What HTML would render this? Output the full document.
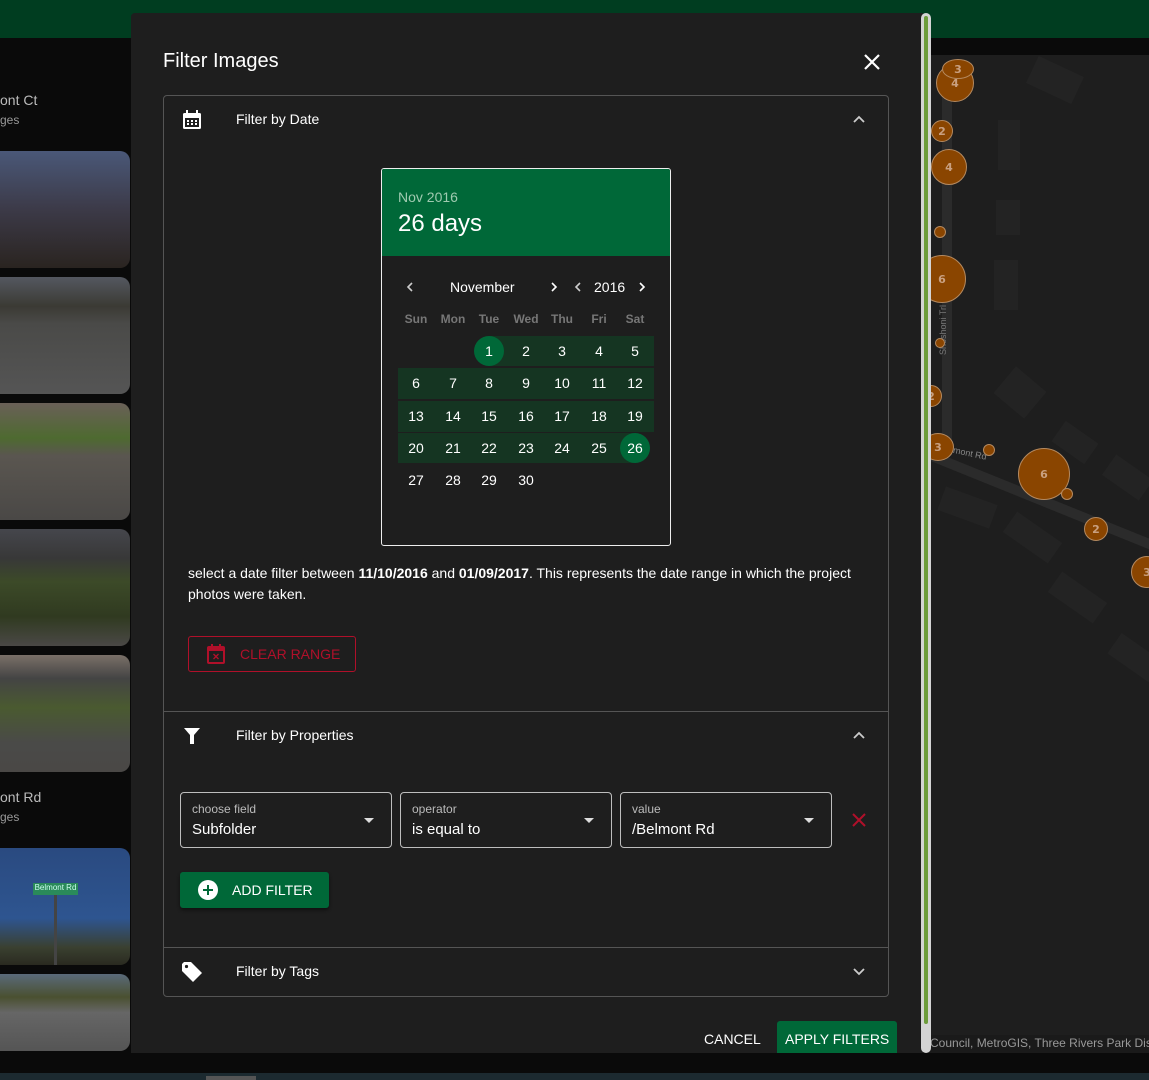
<!DOCTYPE html>
<html><head><meta charset="utf-8">
<style>
*{box-sizing:border-box;margin:0;padding:0}
body{width:1149px;height:1080px;overflow:hidden;background:#0a0a0a;font-family:"Liberation Sans",Arial,sans-serif;color:#fff;position:relative}
.abs{position:absolute}
.card{position:absolute;left:0;width:130px;border-radius:0 10px 10px 0;overflow:hidden}
.t{position:absolute;white-space:nowrap}
.day{position:absolute;width:30px;height:30px;line-height:30px;text-align:center;font-size:14px;color:#fff}
.wd{position:absolute;width:40px;text-align:center;font-size:12px;color:#777;font-weight:bold;top:312px}
.strip{position:absolute;left:398px;width:256px;height:30px;background:#153522}
.circ{position:absolute;width:30px;height:30px;border-radius:50%;background:#006838}
.mk{position:absolute;border-radius:50%;background:#8a4500;border:1px solid #b58a60;color:#c9a080;font-size:11px;font-weight:bold;display:flex;align-items:center;justify-content:center;font-family:"DejaVu Sans",sans-serif}
.sel{position:absolute;top:792px;width:212px;height:56px;border:1px solid #bdbdbd;border-radius:4px}
.sel .l{position:absolute;left:11px;top:9px;font-size:12px;color:#bbb}
.sel .v{position:absolute;left:11px;top:28px;font-size:15px;color:#fff}
.sel .a{position:absolute;right:17px;top:25px;width:0;height:0;border-left:5px solid transparent;border-right:5px solid transparent;border-top:5px solid #ddd}
</style></head><body>
<div class="abs" style="left:0;top:0;width:1149px;height:38px;background:#003d20"></div>
<div class="abs" style="left:930px;top:55px;width:219px;height:998px;background:#1e1e1e;overflow:hidden">
 <div class="abs" style="left:12px;top:40px;width:10px;height:360px;background:#2b2b2b"></div>
 <div class="abs" style="left:0;top:395px;width:260px;height:10px;background:#2b2b2b;transform:rotate(22deg);transform-origin:0 0"></div>
 <div class="abs" style="left:100px;top:10px;width:50px;height:30px;background:#232323;transform:rotate(25deg)"></div>
 <div class="abs" style="left:68px;top:65px;width:22px;height:50px;background:#232323"></div>
 <div class="abs" style="left:66px;top:145px;width:24px;height:35px;background:#232323"></div>
 <div class="abs" style="left:64px;top:205px;width:24px;height:50px;background:#232323"></div>
 <div class="abs" style="left:70px;top:320px;width:40px;height:35px;background:#232323;transform:rotate(40deg)"></div>
 <div class="abs" style="left:125px;top:375px;width:40px;height:25px;background:#232323;transform:rotate(35deg)"></div>
 <div class="abs" style="left:175px;top:410px;width:45px;height:25px;background:#232323;transform:rotate(35deg)"></div>
 <div class="abs" style="left:10px;top:440px;width:55px;height:25px;background:#232323;transform:rotate(20deg)"></div>
 <div class="abs" style="left:75px;top:470px;width:55px;height:25px;background:#232323;transform:rotate(35deg)"></div>
 <div class="abs" style="left:120px;top:530px;width:55px;height:25px;background:#232323;transform:rotate(35deg)"></div>
 <div class="abs" style="left:180px;top:590px;width:50px;height:25px;background:#232323;transform:rotate(35deg)"></div>
 <div class="t" style="left:8px;top:300px;font-size:9px;color:#777;transform:rotate(-90deg);transform-origin:0 0">Shoshoni Trl</div>
 <div class="t" style="left:10px;top:392px;font-size:9px;color:#888;transform:rotate(12deg)">Belmont Rd</div>
</div>
<div class="mk" style="left:936px;top:64px;width:38px;height:38px">4</div>
<div class="mk" style="left:942px;top:59px;width:32px;height:20px">3</div>
<div class="mk" style="left:931px;top:120px;width:22px;height:22px">2</div>
<div class="mk" style="left:931px;top:149px;width:36px;height:36px">4</div>
<div class="mk" style="left:934px;top:226px;width:12px;height:12px"></div>
<div class="mk" style="left:918px;top:255px;width:48px;height:48px">6</div>
<div class="mk" style="left:935px;top:338px;width:10px;height:10px"></div>
<div class="mk" style="left:920px;top:385px;width:22px;height:22px">2</div>
<div class="mk" style="left:922px;top:433px;width:32px;height:28px">3</div>
<div class="mk" style="left:983px;top:444px;width:12px;height:12px"></div>
<div class="mk" style="left:1018px;top:448px;width:52px;height:52px">6</div>
<div class="mk" style="left:1061px;top:488px;width:12px;height:12px"></div>
<div class="mk" style="left:1084px;top:517px;width:24px;height:24px">2</div>
<div class="mk" style="left:1131px;top:556px;width:32px;height:32px">3</div>
<div class="abs" style="left:928px;top:1035px;width:221px;height:18px;background:#1a1a1a"></div>
<div class="t" style="left:930px;top:1036px;font-size:12px;color:#999">Council, MetroGIS, Three Rivers Park Dist</div>
<div class="t" style="left:0;top:92px;font-size:14px;color:#bbb">ont Ct</div>
<div class="t" style="left:0;top:113px;font-size:12px;color:#999">ges</div>
<div class="card" style="top:151px;height:117px;background:linear-gradient(180deg,#4a5878 0%,#3c3a48 50%,#2a2420 100%)"></div>
<div class="card" style="top:277px;height:117px;background:linear-gradient(180deg,#545860 0%,#3b3a34 25%,#4a4a48 40%,#555 100%)"></div>
<div class="card" style="top:403px;height:117px;background:linear-gradient(180deg,#6a6058 0%,#4e6a30 30%,#5a5650 45%,#4a4846 100%)"></div>
<div class="card" style="top:529px;height:117px;background:linear-gradient(180deg,#45464c 0%,#383838 25%,#3c4a28 45%,#303a20 75%,#4a4846 100%)"></div>
<div class="card" style="top:655px;height:117px;background:linear-gradient(180deg,#7a7068 0%,#444 20%,#4a5a30 45%,#4a4a48 75%,#4a4846 100%)"></div>
<div class="t" style="left:0;top:789px;font-size:14px;color:#bbb">ont Rd</div>
<div class="t" style="left:0;top:810px;font-size:12px;color:#999">ges</div>
<div class="card" style="top:848px;height:117px;background:linear-gradient(180deg,#2a4a80 0%,#2e5590 60%,#3a4030 85%,#2a2a20 100%)"></div>
<div class="abs" style="left:33px;top:883px;width:45px;height:12px;background:#2a8a5a;font-size:8px;color:#cfe;text-align:center">Belmont Rd</div>
<div class="abs" style="left:54px;top:895px;width:3px;height:70px;background:#444"></div>
<div class="card" style="top:974px;height:77px;background:linear-gradient(180deg,#5a6a7a 0%,#4a5030 30%,#666 50%,#555 100%)"></div>
<div class="abs" style="left:0;top:1073px;width:1149px;height:7px;background:#1c2a30"></div>
<div class="abs" style="left:206px;top:1076px;width:50px;height:4px;background:#555"></div>
<div class="abs" style="left:131px;top:13px;width:792px;height:1040px;background:#1e1e1e;border-radius:4px 0 0 0"></div>
<div class="abs" style="left:921px;top:13px;width:10px;height:1040px;background:#d4d4d4;border-radius:5px"></div>
<div class="abs" style="left:924px;top:16px;width:4px;height:1008px;background:#6d9c3c;border-radius:2px"></div>

<div class="t" style="left:163px;top:50px;font-size:20px">Filter Images</div>
<svg class="abs" style="left:862px;top:52px" width="20" height="20" viewBox="0 0 20 20"><path d="M3 3L17 17M17 3L3 17" stroke="#fff" stroke-width="2.2"/></svg>

<div class="abs" style="left:163px;top:95px;width:726px;height:902px;border:1px solid #555;border-radius:4px"></div>
<div class="abs" style="left:164px;top:711px;width:724px;height:1px;background:#555"></div>
<div class="abs" style="left:164px;top:947px;width:724px;height:1px;background:#555"></div>

<svg class="abs" style="left:181px;top:109px" width="22" height="22" viewBox="0 0 22 22"><rect x="2" y="4" width="18" height="16" rx="1.5" fill="#fff"/><rect x="5" y="1" width="2" height="4" fill="#fff"/><rect x="15" y="1" width="2" height="4" fill="#fff"/><rect x="4" y="9" width="14" height="9" fill="#1e1e1e"/><g fill="#fff"><rect x="6" y="11" width="2" height="2"/><rect x="10" y="11" width="2" height="2"/><rect x="14" y="11" width="2" height="2"/><rect x="6" y="14" width="2" height="2"/><rect x="10" y="14" width="2" height="2"/><rect x="14" y="14" width="2" height="2"/></g></svg>
<div class="t" style="left:236px;top:111px;font-size:14px">Filter by Date</div>
<svg class="abs" style="left:852px;top:114px" width="14" height="10" viewBox="0 0 14 10"><path d="M2 8L7 3L12 8" stroke="#ccc" stroke-width="1.8" fill="none"/></svg>

<div class="abs" style="left:381px;top:168px;width:290px;height:378px;border:1px solid #eee;border-radius:3px;overflow:hidden">
 <div style="height:87px;background:#006838"></div>
</div>
<div class="t" style="left:398px;top:189px;font-size:14px;color:#9fcab0">Nov 2016</div>
<div class="t" style="left:398px;top:210px;font-size:24px">26 days</div>
<svg class="abs" style="left:405px;top:281px" width="10" height="12" viewBox="0 0 10 12"><path d="M7 2L3 6L7 10" stroke="#ccc" stroke-width="1.6" fill="none"/></svg>
<div class="t" style="left:450px;top:279px;font-size:14px">November</div>
<svg class="abs" style="left:549px;top:281px" width="10" height="12" viewBox="0 0 10 12"><path d="M3 2L7 6L3 10" stroke="#fff" stroke-width="1.6" fill="none"/></svg>
<svg class="abs" style="left:573px;top:281px" width="10" height="12" viewBox="0 0 10 12"><path d="M7 2L3 6L7 10" stroke="#ccc" stroke-width="1.6" fill="none"/></svg>
<div class="t" style="left:594px;top:279px;font-size:14px">2016</div>
<svg class="abs" style="left:637px;top:281px" width="10" height="12" viewBox="0 0 10 12"><path d="M3 2L7 6L3 10" stroke="#fff" stroke-width="1.6" fill="none"/></svg>
<div class="wd" style="left:396px">Sun</div><div class="wd" style="left:433px">Mon</div><div class="wd" style="left:469px">Tue</div><div class="wd" style="left:506px">Wed</div><div class="wd" style="left:542px">Thu</div><div class="wd" style="left:579px">Fri</div><div class="wd" style="left:615px">Sat</div>
<div class="strip" style="left:489px;width:165px;top:336px"></div>
<div class="strip" style="top:368px;height:31px"></div>
<div class="strip" style="top:401px;height:31px"></div>
<div class="strip" style="top:433px;width:237px"></div>
<div class="circ" style="left:474px;top:336px"></div>
<div class="circ" style="left:620px;top:433px"></div>
<div id="days"></div>
<script>
var xs=[416,453,489,526,562,599,635],ys=[351,383,416,448,480],h='',d=1;
for(var r=0;r<5;r++)for(var c=0;c<7;c++){if(r==0&&c<2)continue;if(d>30)break;h+='<div class="day" style="left:'+(xs[c]-15)+'px;top:'+(ys[r]-15)+'px">'+d+'</div>';d++;}
document.getElementById('days').innerHTML=h;
</script>

<div class="t" style="left:188px;top:563px;font-size:14px;line-height:21px;white-space:normal;width:680px">select a date filter between <b>11/10/2016</b> and <b>01/09/2017</b>. This represents the date range in which the project photos were taken.</div>

<div class="abs" style="left:188px;top:636px;width:168px;height:36px;border:1px solid #b0102a;border-radius:3px"></div>
<svg class="abs" style="left:206px;top:643px" width="20" height="22" viewBox="0 0 20 22"><rect x="2" y="4" width="16" height="16" rx="1" fill="none" stroke="#b0102a" stroke-width="2"/><rect x="5" y="1" width="2" height="4" fill="#b0102a"/><rect x="13" y="1" width="2" height="4" fill="#b0102a"/><rect x="2" y="5" width="16" height="3" fill="#b0102a"/><path d="M7.5 11L12.5 16M12.5 11L7.5 16" stroke="#b0102a" stroke-width="1.4"/></svg>
<div class="t" style="left:240px;top:646px;font-size:14px;color:#b0102a">CLEAR RANGE</div>

<svg class="abs" style="left:183px;top:727px" width="18" height="18" viewBox="0 0 18 18"><path d="M1 1H17L11 8V17H7V8Z" fill="#fff"/></svg>
<div class="t" style="left:236px;top:727px;font-size:14px">Filter by Properties</div>
<svg class="abs" style="left:852px;top:730px" width="14" height="10" viewBox="0 0 14 10"><path d="M2 8L7 3L12 8" stroke="#ccc" stroke-width="1.8" fill="none"/></svg>

<div class="sel" style="left:180px"><div class="l">choose field</div><div class="v">Subfolder</div><div class="a"></div></div>
<div class="sel" style="left:400px"><div class="l">operator</div><div class="v">is equal to</div><div class="a"></div></div>
<div class="sel" style="left:620px"><div class="l">value</div><div class="v">/Belmont Rd</div><div class="a"></div></div>
<svg class="abs" style="left:851px;top:812px" width="16" height="16" viewBox="0 0 16 16"><path d="M2 2L14 14M14 2L2 14" stroke="#b0102a" stroke-width="2"/></svg>

<div class="abs" style="left:180px;top:872px;width:149px;height:36px;background:#006838;border-radius:3px;box-shadow:0 2px 3px rgba(0,0,0,.5)"></div>
<svg class="abs" style="left:197px;top:879px" width="22" height="22" viewBox="0 0 22 22"><circle cx="11" cy="11" r="10" fill="#fff"/><path d="M11 6V16M6 11H16" stroke="#006838" stroke-width="2"/></svg>
<div class="t" style="left:232px;top:882px;font-size:14px">ADD FILTER</div>

<svg class="abs" style="left:180px;top:960px" width="24" height="24" viewBox="0 0 24 24"><path d="M2 4V11L13 22L22 13L11 2H4Z" fill="#fff"/><circle cx="6.5" cy="6.5" r="1.6" fill="#1e1e1e"/></svg>
<div class="t" style="left:236px;top:963px;font-size:14px">Filter by Tags</div>
<svg class="abs" style="left:852px;top:967px" width="14" height="10" viewBox="0 0 14 10"><path d="M2 2L7 7L12 2" stroke="#ccc" stroke-width="1.8" fill="none"/></svg>

<div class="t" style="left:704px;top:1031px;font-size:14px">CANCEL</div>
<div class="abs" style="left:777px;top:1021px;width:120px;height:32px;background:#006838;border-radius:3px 3px 0 0"></div>
<div class="t" style="left:785px;top:1031px;font-size:14px">APPLY FILTERS</div>
</body></html>
